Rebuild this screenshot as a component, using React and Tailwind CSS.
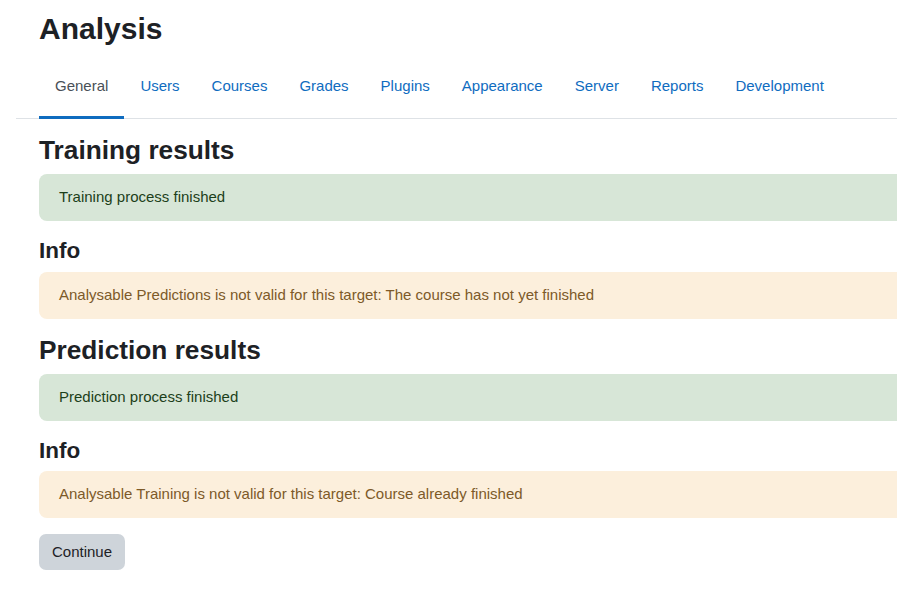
import React from 'react';

const tabs = ['General', 'Users', 'Courses', 'Grades', 'Plugins', 'Appearance', 'Server', 'Reports', 'Development'];

function Alert({ kind, children }) {
  const styles =
    kind === 'success'
      ? 'bg-[#d7e6d7] text-[#1c3f1a]'
      : 'bg-[#fcefdc] text-[#7d5a29]';
  return (
    <div className={`${styles} mr-[-24px] rounded-[8px] px-[20px] py-[12px] text-[15px] leading-[22.5px] mb-[16px]`}>
      {children}
    </div>
  );
}

function App() {
  return (
    <div
      className="min-h-screen w-full overflow-hidden bg-white text-[#1d2125]"
      style={{ fontFamily: '"Liberation Sans", Arial, sans-serif' }}
    >
      <div className="pl-[16px]">
        <div className="pl-[23px] pt-[11px] pb-[11px]">
          <h1 className="text-[30px] leading-[36px] font-bold">Analysis</h1>
        </div>

        <nav className="pl-[23px] border-b border-[#dee2e6] mr-[-24px]">
          <ul className="flex">
            {tabs.map((t, i) => (
              <li key={t}>
                <a
                  href="#"
                  className={`block px-[16px] pt-[17px] pb-[19px] mb-[-1px] text-[15px] leading-[22px] border-b-[3px] ${
                    i === 0 ? 'border-[#0f6cbf] text-[#495057]' : 'border-transparent text-[#0f6cbf]'
                  }`}
                >
                  {t}
                </a>
              </li>
            ))}
          </ul>
        </nav>

        <div className="pl-[23px] pt-[16px]">
          <h3 className="text-[26.25px] leading-[31.5px] font-bold mb-[7.5px]">Training results</h3>
          <Alert kind="success">Training process finished</Alert>

          <h4 className="text-[22.5px] leading-[27px] font-bold mb-[8.5px]">Info</h4>
          <Alert kind="warning">Analysable Predictions is not valid for this target: The course has not yet finished</Alert>

          <h3 className="text-[26.25px] leading-[31.5px] font-bold mb-[8px]">Prediction results</h3>
          <Alert kind="success">Prediction process finished</Alert>

          <h4 className="text-[22.5px] leading-[27px] font-bold mb-[7.5px]">Info</h4>
          <Alert kind="warning">Analysable Training is not valid for this target: Course already finished</Alert>

          <button className="bg-[#ced4da] text-[#1d2125] rounded-[7px] px-[13px] py-[7px] text-[15px] leading-[22.5px]">
            Continue
          </button>
        </div>
      </div>
    </div>
  );
}

export default App;
